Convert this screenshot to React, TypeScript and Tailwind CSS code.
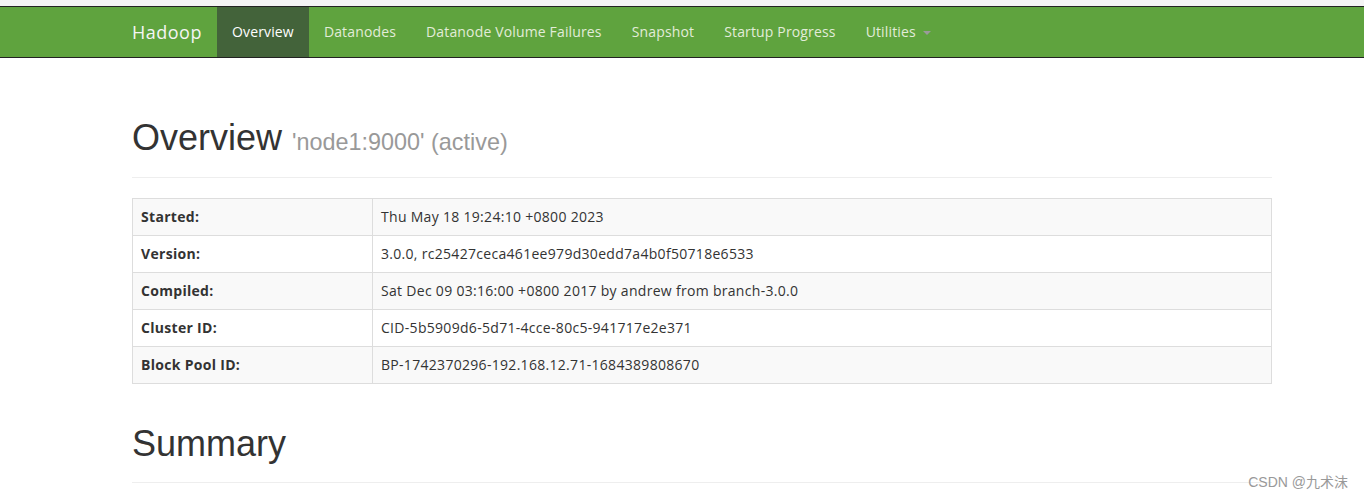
const navItems = [
  { label: "Overview", active: true },
  { label: "Datanodes" },
  { label: "Datanode Volume Failures" },
  { label: "Snapshot" },
  { label: "Startup Progress" },
];

const info = [
  ["Started:", "Thu May 18 19:24:10 +0800 2023"],
  ["Version:", "3.0.0, rc25427ceca461ee979d30edd7a4b0f50718e6533"],
  ["Compiled:", "Sat Dec 09 03:16:00 +0800 2017 by andrew from branch-3.0.0"],
  ["Cluster ID:", "CID-5b5909d6-5d71-4cce-80c5-941717e2e371"],
  ["Block Pool ID:", "BP-1742370296-192.168.12.71-1684389808670"],
];

const App = () => {
  return (
    <div className="relative h-[501px] overflow-hidden bg-white text-[#333] font-['Open_Sans',sans-serif]">
      {/* browser strip */}
      <div className="h-[6px] bg-[#f4f4f4]" />

      {/* Navbar */}
      <nav className="h-[52px] bg-[#5fa33e] border-y border-[#222]">
        <div className="ml-[117px] flex h-[50px] items-stretch">
          <a className="flex items-center px-[15px] text-[18px] tracking-[0.5px] text-[#f5f5f5]">Hadoop</a>
          {navItems.map((item) => (
            <a
              key={item.label}
              className={
                item.active
                  ? "flex items-center px-[15px] text-[14px] leading-[20px] tracking-[0.15px] bg-[#43633a] text-white"
                  : "flex items-center px-[15px] text-[14px] leading-[20px] tracking-[0.15px] text-[#e2ecd9]"
              }
            >
              {item.label}
            </a>
          ))}
          <a className="flex items-center px-[15px] text-[14px] leading-[20px] tracking-[0.15px] text-[#e2ecd9]">
            Utilities
            <span className="ml-[7px] mt-[2px] inline-block h-0 w-0 border-t-[4px] border-x-[4px] border-t-[#9a9a9a] border-x-transparent" />
          </a>
        </div>
      </nav>

      <main className="ml-[132px] w-[1140px]">
        <div className="mt-[60px] border-b border-[#eee] pb-[19px]">
          <h1 className="font-['Liberation_Sans',Arial,sans-serif] text-[36px] leading-[39.6px] text-[#333]">
            Overview{" "}
            <small className="text-[23.4px] leading-none text-[#999]">'node1:9000' (active)</small>
          </h1>
        </div>

        <table className="mt-[20px] w-full border-collapse border border-[#ddd] text-[14px] leading-[20px] tracking-[0.3px]">
          <tbody>
            {info.map(([k, v], i) => (
              <tr key={k} className={i % 2 === 0 ? "bg-[#f9f9f9]" : "bg-white"}>
                <th className="w-[240px] border border-[#ddd] p-[8px] text-left font-bold">{k}</th>
                <td className="border border-[#ddd] p-[8px]">{v}</td>
              </tr>
            ))}
          </tbody>
        </table>

        <div className="mt-[40px] border-b border-[#eee] pb-[19px]">
          <h1 className="font-['Liberation_Sans',Arial,sans-serif] text-[36px] leading-[39.6px] text-[#333]">
            Summary
          </h1>
        </div>
      </main>

      {/* watermark */}
      <div className="absolute right-[16px] bottom-[8px] text-[14px] text-[#999] font-['Liberation_Sans','Noto_Sans_CJK_SC',sans-serif]">
        CSDN @九术沫
      </div>
    </div>
  );
};

export default App;
